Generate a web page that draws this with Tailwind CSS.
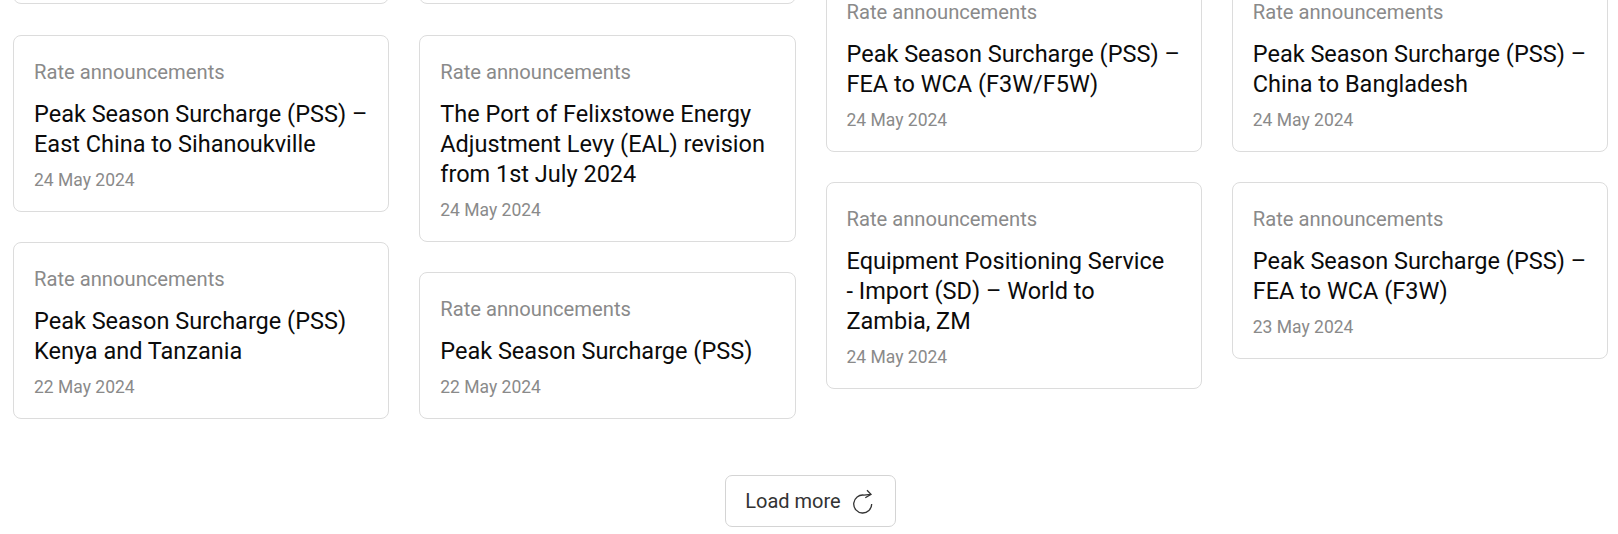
<!DOCTYPE html>
<html><head><meta charset="utf-8"><script src="https://cdn.jsdelivr.net/npm/@tailwindcss/browser@4"></script></head>
<body class="bg-white">
<div class="h-[534px] w-[1618px] overflow-hidden font-['Roboto',sans-serif]">
<div class="grid grid-cols-4 gap-x-[30px] items-start pl-[13px] pr-[10px]">
<div class="flex flex-col gap-[30px] mt-[-172px]">
<div class="h-[176px] mb-[1px] rounded-[8px] border border-[#dcdcdc]"></div>
<div class="rounded-[8px] border border-[#dcdcdc] px-[20px] pt-[22px] pb-[19px]"><p class="text-[20.2px] leading-[28px] text-[#8a8a8a]">Rate announcements</p><h3 class="mt-[13px] text-[23.5px] leading-[30px] text-[#0b0b0b]">Peak Season Surcharge (PSS) – East China to Sihanoukville</h3><p class="mt-[9px] text-[17.5px] leading-[24px] text-[#8a8a8a]">24 May 2024</p></div>
<div class="rounded-[8px] border border-[#dcdcdc] px-[20px] pt-[22px] pb-[19px]"><p class="text-[20.2px] leading-[28px] text-[#8a8a8a]">Rate announcements</p><h3 class="mt-[13px] text-[23.5px] leading-[30px] text-[#0b0b0b]">Peak Season Surcharge (PSS) Kenya and Tanzania</h3><p class="mt-[9px] text-[17.5px] leading-[24px] text-[#8a8a8a]">22 May 2024</p></div>
</div>
<div class="flex flex-col gap-[30px] mt-[-172px]">
<div class="h-[176px] mb-[1px] rounded-[8px] border border-[#dcdcdc]"></div>
<div class="rounded-[8px] border border-[#dcdcdc] px-[20px] pt-[22px] pb-[19px]"><p class="text-[20.2px] leading-[28px] text-[#8a8a8a]">Rate announcements</p><h3 class="mt-[13px] text-[23.5px] leading-[30px] text-[#0b0b0b]">The Port of Felixstowe Energy Adjustment Levy (EAL) revision from 1st July 2024</h3><p class="mt-[9px] text-[17.5px] leading-[24px] text-[#8a8a8a]">24 May 2024</p></div>
<div class="rounded-[8px] border border-[#dcdcdc] px-[20px] pt-[22px] pb-[19px]"><p class="text-[20.2px] leading-[28px] text-[#8a8a8a]">Rate announcements</p><h3 class="mt-[13px] text-[23.5px] leading-[30px] text-[#0b0b0b]">Peak Season Surcharge (PSS)</h3><p class="mt-[9px] text-[17.5px] leading-[24px] text-[#8a8a8a]">22 May 2024</p></div>
</div>
<div class="flex flex-col gap-[30px] mt-[-25px]">
<div class="rounded-[8px] border border-[#dcdcdc] px-[20px] pt-[22px] pb-[19px]"><p class="text-[20.2px] leading-[28px] text-[#8a8a8a]">Rate announcements</p><h3 class="mt-[13px] text-[23.5px] leading-[30px] text-[#0b0b0b]">Peak Season Surcharge (PSS) – FEA to WCA (F3W/F5W)</h3><p class="mt-[9px] text-[17.5px] leading-[24px] text-[#8a8a8a]">24 May 2024</p></div>
<div class="rounded-[8px] border border-[#dcdcdc] px-[20px] pt-[22px] pb-[19px]"><p class="text-[20.2px] leading-[28px] text-[#8a8a8a]">Rate announcements</p><h3 class="mt-[13px] text-[23.5px] leading-[30px] text-[#0b0b0b]">Equipment Positioning Service<br>- Import (SD) – World to<br>Zambia, ZM</h3><p class="mt-[9px] text-[17.5px] leading-[24px] text-[#8a8a8a]">24 May 2024</p></div>
</div>
<div class="flex flex-col gap-[30px] mt-[-25px]">
<div class="rounded-[8px] border border-[#dcdcdc] px-[20px] pt-[22px] pb-[19px]"><p class="text-[20.2px] leading-[28px] text-[#8a8a8a]">Rate announcements</p><h3 class="mt-[13px] text-[23.5px] leading-[30px] text-[#0b0b0b]">Peak Season Surcharge (PSS) – China to Bangladesh</h3><p class="mt-[9px] text-[17.5px] leading-[24px] text-[#8a8a8a]">24 May 2024</p></div>
<div class="rounded-[8px] border border-[#dcdcdc] px-[20px] pt-[22px] pb-[19px]"><p class="text-[20.2px] leading-[28px] text-[#8a8a8a]">Rate announcements</p><h3 class="mt-[13px] text-[23.5px] leading-[30px] text-[#0b0b0b]">Peak Season Surcharge (PSS) – FEA to WCA (F3W)</h3><p class="mt-[9px] text-[17.5px] leading-[24px] text-[#8a8a8a]">23 May 2024</p></div>
</div>
</div>
<div class="flex justify-center pt-[56px] pl-[2px]">
<button class="flex h-[52px] w-[171px] items-center justify-center gap-[10px] rounded-[7px] border border-[#d4d4d4] text-[20px] text-[#333]">Load more
<svg class="overflow-visible" width="24" height="24" viewBox="0 0 24 24" fill="none" stroke="#333" stroke-width="1.3"><path d="M16 1.3l4 4-5.7 3.4"/><path d="M20.7 15A9 9 0 1 1 13 6.1L19.5 5.3"/></svg></button>
</div>
</div>
</body></html>
